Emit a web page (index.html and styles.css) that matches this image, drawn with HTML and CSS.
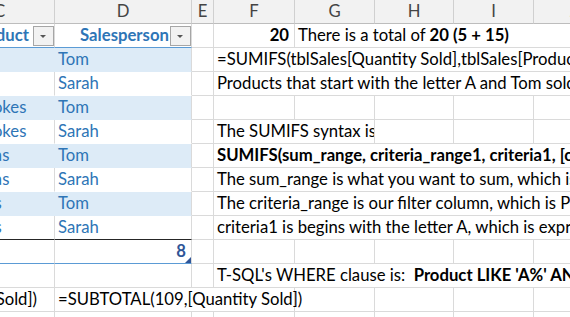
FILE: index.html
```html
<!DOCTYPE html>
<html lang="en">
<head>
    <meta charset="UTF-8">
    <title>tblSales - SUMIFS notes</title>
    <link rel="stylesheet" href="styles.css">
</head>
<body>
    <div class="sheet">
        <!-- column letters -->
        <div class="ch">C</div>
        <div class="ch">D</div>
        <div class="ch">E</div>
        <div class="ch">F</div>
        <div class="ch">G</div>
        <div class="ch">H</div>
        <div class="ch">I</div>
        <div class="ch">J</div>

        <!-- table header -->
        <div class="cell th c">Product<span class="filter"></span></div>
        <div class="cell th d">Salesperson<span class="filter"></span></div>
        <div class="cell"></div>
        <div class="cell num bold">20</div>
        <div class="cell span4">There is a total of <b>20 (5 + 15)</b></div>

        <div class="cell t band c"></div>
        <div class="cell t band d">Tom</div>
        <div class="cell"></div>
        <div class="cell span5">=SUMIFS(tblSales[Quantity Sold],tblSales[Product],"A*",tblSales[Salesperson],"Tom")</div>

        <div class="cell t plain c"></div>
        <div class="cell t plain d">Sarah</div>
        <div class="cell"></div>
        <div class="cell span5">Products that start with the letter A and Tom sold</div>

        <div class="cell t band c">Artichokes</div>
        <div class="cell t band d">Tom</div>
        <div class="cell"></div>
        <div class="cell"></div>
        <div class="cell"></div>
        <div class="cell"></div>
        <div class="cell"></div>
        <div class="cell"></div>

        <div class="cell t plain c">Artichokes</div>
        <div class="cell t plain d">Sarah</div>
        <div class="cell"></div>
        <div class="cell span2">The SUMIFS syntax is</div>
        <div class="cell"></div>
        <div class="cell"></div>
        <div class="cell"></div>

        <div class="cell t band c">Bananas</div>
        <div class="cell t band d">Tom</div>
        <div class="cell"></div>
        <div class="cell span5 bold">SUMIFS(sum_range, criteria_range1, criteria1, [criteria_range2, criteria2], ...)</div>

        <div class="cell t plain c">Bananas</div>
        <div class="cell t plain d">Sarah</div>
        <div class="cell"></div>
        <div class="cell span5">The sum_range is what you want to sum, which is Quantity Sold.</div>

        <div class="cell t band c">Carrots</div>
        <div class="cell t band d">Tom</div>
        <div class="cell"></div>
        <div class="cell span5">The criteria_range is our filter column, which is Product.</div>

        <div class="cell t plain last c">Carrots</div>
        <div class="cell t plain last d">Sarah</div>
        <div class="cell"></div>
        <div class="cell span5">criteria1 is begins with the letter A, which is expressed as "A*".</div>

        <!-- total row -->
        <div class="cell total c"></div>
        <div class="cell total d num">8<span class="handle"></span></div>
        <div class="cell"></div>
        <div class="cell"></div>
        <div class="cell"></div>
        <div class="cell"></div>
        <div class="cell"></div>
        <div class="cell"></div>

        <div class="cell"></div>
        <div class="cell"></div>
        <div class="cell"></div>
        <div class="cell span5">T-SQL's WHERE clause is:&nbsp; <b>Product LIKE 'A%' AND Salesperson = 'Tom'</b></div>

        <div class="cell spill-in">=SUM(tblSales[Quantity Sold])</div>
        <div class="cell span3 spill">=SUBTOTAL(109,[Quantity Sold])</div>
        <div class="cell"></div>
        <div class="cell"></div>
        <div class="cell"></div>
        <div class="cell"></div>

        <div class="cell"></div>
        <div class="cell"></div>
        <div class="cell"></div>
        <div class="cell"></div>
        <div class="cell"></div>
        <div class="cell"></div>
        <div class="cell"></div>
        <div class="cell"></div>
    </div>
</body>
</html>
```

FILE: styles.css
```css
body {
    margin: 0;
    overflow: hidden;
    background: #fff;
    font-family: Lato, "Liberation Sans", sans-serif;
    font-size: 16.7px;
    color: #000;
}

.sheet {
    display: grid;
    grid-template-columns: 110px 137px 22px 81px 80px 79px 80px 80px;
    grid-template-rows: repeat(14, 24px);
    margin-left: -55px;
    width: 669px;
}

/* column letters */
.ch {
    box-sizing: border-box;
    background: #f2f2f2;
    border-right: 1px solid #d0d0d0;
    border-bottom: 1px solid #bdbdbd;
    color: #444;
    text-align: center;
    line-height: 23px;
}

.cell {
    position: relative;
    box-sizing: border-box;
    border-right: 1px solid #dadada;
    border-bottom: 1px solid #dadada;
    padding: 0 3px;
    line-height: 23px;
    white-space: nowrap;
    overflow: hidden;
}

.bold,
.cell b {
    font-weight: bold;
}

.num {
    text-align: right;
    padding-right: 5px;
}

.span2 { grid-column: span 2; }
.span3 { grid-column: span 3; }
.span4 { grid-column: span 4; }
.span5 { grid-column: span 5; }

/* tblSales */
.th {
    font-weight: bold;
    color: #2e75b6;
    text-align: center;
    border-bottom-color: #5b9bd5;
}

.th.d {
    padding-right: 0;
}

.filter {
    position: absolute;
    right: 0;
    top: 2px;
    width: 21px;
    height: 20px;
    box-sizing: border-box;
    border: 1px solid #a6a6a6;
    background: #f2f2f2;
}

.filter::after {
    content: "";
    position: absolute;
    left: 6px;
    top: 8px;
    border-left: 3px solid transparent;
    border-right: 3px solid transparent;
    border-top: 3px solid #555;
}

.t {
    color: #2e75b6;
}

.band {
    background: #ddebf7;
    border-bottom-color: #ddebf7;
}

.band.c {
    border-right-color: #ddebf7;
}

.plain {
    border-bottom-color: #fff;
}

.plain.last {
    border-bottom-color: #262626;
}

.total {
    border-bottom-color: #5b9bd5;
    font-weight: bold;
    color: #2f5597;
}

.handle {
    position: absolute;
    right: 0;
    bottom: 0;
    width: 0;
    height: 0;
    border-left: 6px solid transparent;
    border-bottom: 6px solid #2f5597;
}

/* text from column B running into C */
.spill-in {
    display: flex;
    justify-content: flex-end;
    padding-right: 17px;
}

.spill {
    overflow: visible;
}
```
